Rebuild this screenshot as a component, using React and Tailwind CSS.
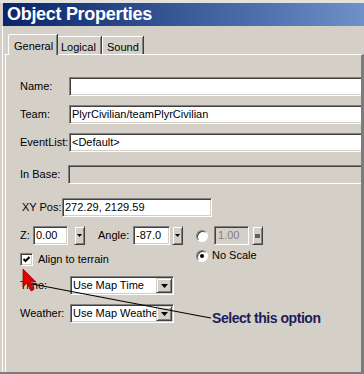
import React from 'react'

const sunken = 'border border-t-[#808080] border-l-[#808080] border-r-white border-b-white shadow-[inset_1px_1px_0_#404040,inset_-1px_-1px_0_#d4d0c8]'
const raised = 'border border-t-[#d4d0c8] border-l-[#d4d0c8] border-r-[#404040] border-b-[#404040] shadow-[inset_1px_1px_0_#ffffff,inset_-1px_-1px_0_#808080]'

function Arrow({ small }) {
  // petit triangle noir des boutons déroulants
  return small ? (
    <svg width="5" height="3" viewBox="0 0 5 3"><path d="M0 0h5L2.5 3z" fill="#000" /></svg>
  ) : (
    <svg width="7" height="4" viewBox="0 0 7 4"><path d="M0 0h7L3.5 4z" fill="#000" /></svg>
  )
}

function SpinBtn({ disabled }) {
  return (
    <div className={`${raised} w-[11px] h-[19px] bg-[#d4d0c8] flex items-center justify-center shrink-0`}>
      {disabled ? <div className='w-[5px] h-[4px] bg-[#606060]' /> : <Arrow small />}
    </div>
  )
}

function Combo({ text }) {
  return (
    <div className={`${sunken} w-[104px] h-[19px] bg-white flex items-center p-[1px] overflow-hidden`}>
      <span className='flex-1 pl-[1px] whitespace-nowrap overflow-hidden'>{text}</span>
      <div className={`${raised} w-[16px] h-full bg-[#d4d0c8] flex items-center justify-center shrink-0`}>
        <Arrow />
      </div>
    </div>
  )
}

function Radio({ checked }) {
  return (
    <div className='w-[12px] h-[12px] rounded-full bg-white border border-t-[#808080] border-l-[#808080] border-r-white border-b-white shadow-[inset_1px_1px_0_#404040] flex items-center justify-center shrink-0'>
      {checked && <div className='w-[4px] h-[4px] rounded-full bg-black' />}
    </div>
  )
}

export default function App() {
  return (
    <div className="relative w-[364px] h-[374px] bg-[#d4d0c8] flex flex-col overflow-hidden font-['Liberation_Sans',Arial,sans-serif] text-[11px] text-black">
      <div className='h-[3px] bg-[#e4e2dc] shrink-0' />

      {/* BARRE DE TITRE */}
      <div className='ml-[3px] h-[23px] shrink-0 bg-gradient-to-r from-[#0a246a] to-[#6f90c8] text-white font-bold text-[18px] tracking-[-0.3px] leading-[23px] pl-[4px]'>
        Object Properties
      </div>

      <div className='flex-1 ml-[2px] border-l border-white flex flex-col min-h-0'>
        {/* ONGLETS */}
        <div className='h-[28px] shrink-0 pl-[5px] flex items-end'>
          <div className='relative z-10 -mb-[1px] w-[49px] h-[21px] bg-[#d4d0c8] border-l border-t border-white rounded-tl-[2px] shadow-[inset_-1px_0_0_#808080,1px_0_0_#404040] pl-[5px] pt-[3px]'>
            General
          </div>
          <div className='w-[44px] h-[18px] bg-[#d4d0c8] border-t border-white shadow-[inset_-1px_0_0_#808080,1px_0_0_#404040] pl-[4px] pt-[2px]'>
            Logical
          </div>
          <div className='ml-[1px] w-[41px] h-[18px] bg-[#d4d0c8] border-l border-t border-white shadow-[inset_-1px_0_0_#808080,1px_0_0_#404040] pl-[4px] pt-[2px]'>
            Sound
          </div>
        </div>

        {/* PANNEAU GENERAL */}
        <div className='flex-1 ml-[2px] border-l border-t border-white border-r-[3px] border-r-[#7c7c7c] overflow-hidden pl-[14px] pt-[22px] flex flex-col'>
          <div className='flex items-center h-[19px]'>
            <span className='w-[49px] shrink-0'>Name:</span>
            <div className={`${sunken} w-[300px] h-[19px] bg-white shrink-0`} />
          </div>
          <div className='flex items-center h-[19px] mt-[9px]'>
            <span className='w-[49px] shrink-0'>Team:</span>
            <div className={`${sunken} w-[300px] h-[19px] bg-white shrink-0 pl-[2px] leading-[17px]`}>PlyrCivilian/teamPlyrCivilian</div>
          </div>
          <div className='flex items-center h-[19px] mt-[9px]'>
            <span className='w-[49px] shrink-0'>EventList:</span>
            <div className={`${sunken} w-[300px] h-[19px] bg-white shrink-0 pl-[2px] leading-[17px]`}>&lt;Default&gt;</div>
          </div>
          <div className='flex items-center h-[19px] mt-[13px]'>
            <span className='w-[48px] shrink-0'>In Base:</span>
            <div className={`${sunken} w-[300px] h-[19px] bg-[#d4d0c8] shrink-0`} />
          </div>
          <div className='flex items-center h-[19px] mt-[14px] pl-[2px]'>
            <span className='w-[40px] shrink-0'>XY Pos:</span>
            <div className={`${sunken} w-[150px] h-[19px] bg-white shrink-0 pl-[2px] leading-[17px]`}>272.29, 2129.59</div>
          </div>

          <div className='flex items-start mt-[9px]'>
            <div className='flex flex-col'>
              <div className='flex items-center h-[19px]'>
                <span className='w-[13px] shrink-0'>Z:</span>
                <div className={`${sunken} w-[35px] h-[19px] bg-white shrink-0 pl-[2px] leading-[17px]`}>0.00</div>
                <div className='ml-[6px]'><SpinBtn /></div>
                <span className='ml-[13px] w-[35px] shrink-0'>Angle:</span>
                <div className={`${sunken} w-[37px] h-[19px] bg-white shrink-0 pl-[2px] leading-[17px] overflow-hidden whitespace-nowrap`}>-87.0</div>
                <div className='ml-[2px]'><SpinBtn /></div>
              </div>
              <div className='flex items-center mt-[8px] h-[13px]'>
                <div className={`${sunken} w-[13px] h-[13px] bg-white flex items-center justify-center shrink-0`}>
                  <svg width="9" height="9" viewBox="0 0 9 9"><path d="M1.5 4 L3.5 6 L7.5 2" stroke="#000" strokeWidth="2" fill="none" /></svg>
                </div>
                <span className='ml-[5px]'>Align to terrain</span>
              </div>
            </div>

            <div className='ml-[13px] flex flex-col'>
              <div className='flex items-center h-[19px]'>
                <Radio />
                <div className={`${sunken} ml-[6px] w-[35px] h-[19px] bg-[#d4d0c8] text-[#808080] shrink-0 pl-[3px] leading-[17px]`}>1.00</div>
                <div className='ml-[3px]'><SpinBtn disabled /></div>
              </div>
              <div className='flex items-center h-[13px] mt-[4px]'>
                <Radio checked />
                <span className='ml-[4px]'>No Scale</span>
              </div>
            </div>
          </div>

          <div className='flex items-center h-[19px] mt-[10px]'>
            <span className='w-[50px] shrink-0'>Time:</span>
            <Combo text='Use Map Time' />
          </div>
          <div className='flex items-start mt-[9px]'>
            <span className='w-[50px] shrink-0 leading-[19px]'>Weather:</span>
            <Combo text='Use Map Weather' />
            <span className='ml-[38px] mt-[6px] text-[14px] leading-[16px] font-bold tracking-[-0.45px] text-[#1c1c5a]'>Select this option</span>
          </div>
        </div>
      </div>

      <div className='h-[2px] bg-[#7c7c7c] shrink-0' />

      {/* ANNOTATION : FLÈCHE ROUGE ET TRAIT */}
      <svg className='absolute inset-0 pointer-events-none' width="364" height="374" viewBox="0 0 364 374">
        <polyline points="27,283 200,316 211,318" fill="none" stroke="#000" strokeWidth="1.2" />
        <path d="M23 269 L23 287 L27 283 L31 291 L34 289.5 L30.5 282 L36 282 Z" fill="#e00000" stroke="#900000" strokeWidth="0.7" />
      </svg>
    </div>
  )
}
